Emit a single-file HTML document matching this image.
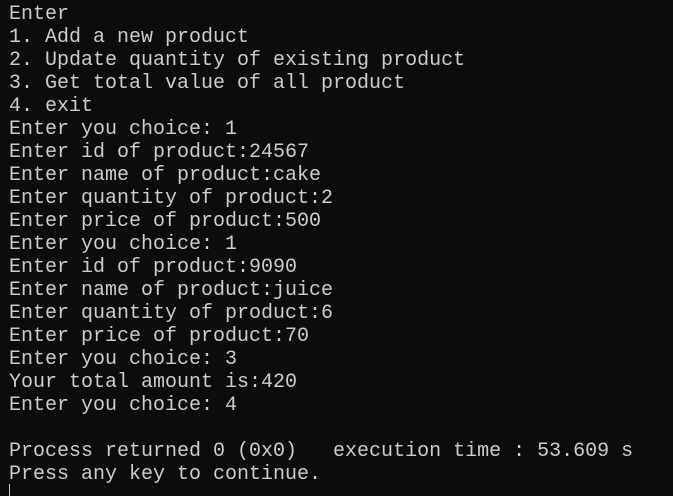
<!DOCTYPE html>
<html><head><meta charset="utf-8"><style>
html,body{margin:0;padding:0;background:#0c0c0c;width:673px;height:496px;overflow:hidden}
pre{margin:0;position:absolute;left:9px;top:3px;font-family:"Liberation Mono","DejaVu Sans Mono",monospace;font-size:20px;line-height:23px;color:#cccccc;letter-spacing:0}
.cur{position:absolute;left:9px;top:484px;width:1px;height:12px;background:#cccccc}
</style></head><body>
<pre>Enter
1. Add a new product
2. Update quantity of existing product
3. Get total value of all product
4. exit
Enter you choice: 1
Enter id of product:24567
Enter name of product:cake
Enter quantity of product:2
Enter price of product:500
Enter you choice: 1
Enter id of product:9090
Enter name of product:juice
Enter quantity of product:6
Enter price of product:70
Enter you choice: 3
Your total amount is:420
Enter you choice: 4

Process returned 0 (0x0)   execution time : 53.609 s
Press any key to continue.</pre>
<div class="cur"></div>
</body></html>
